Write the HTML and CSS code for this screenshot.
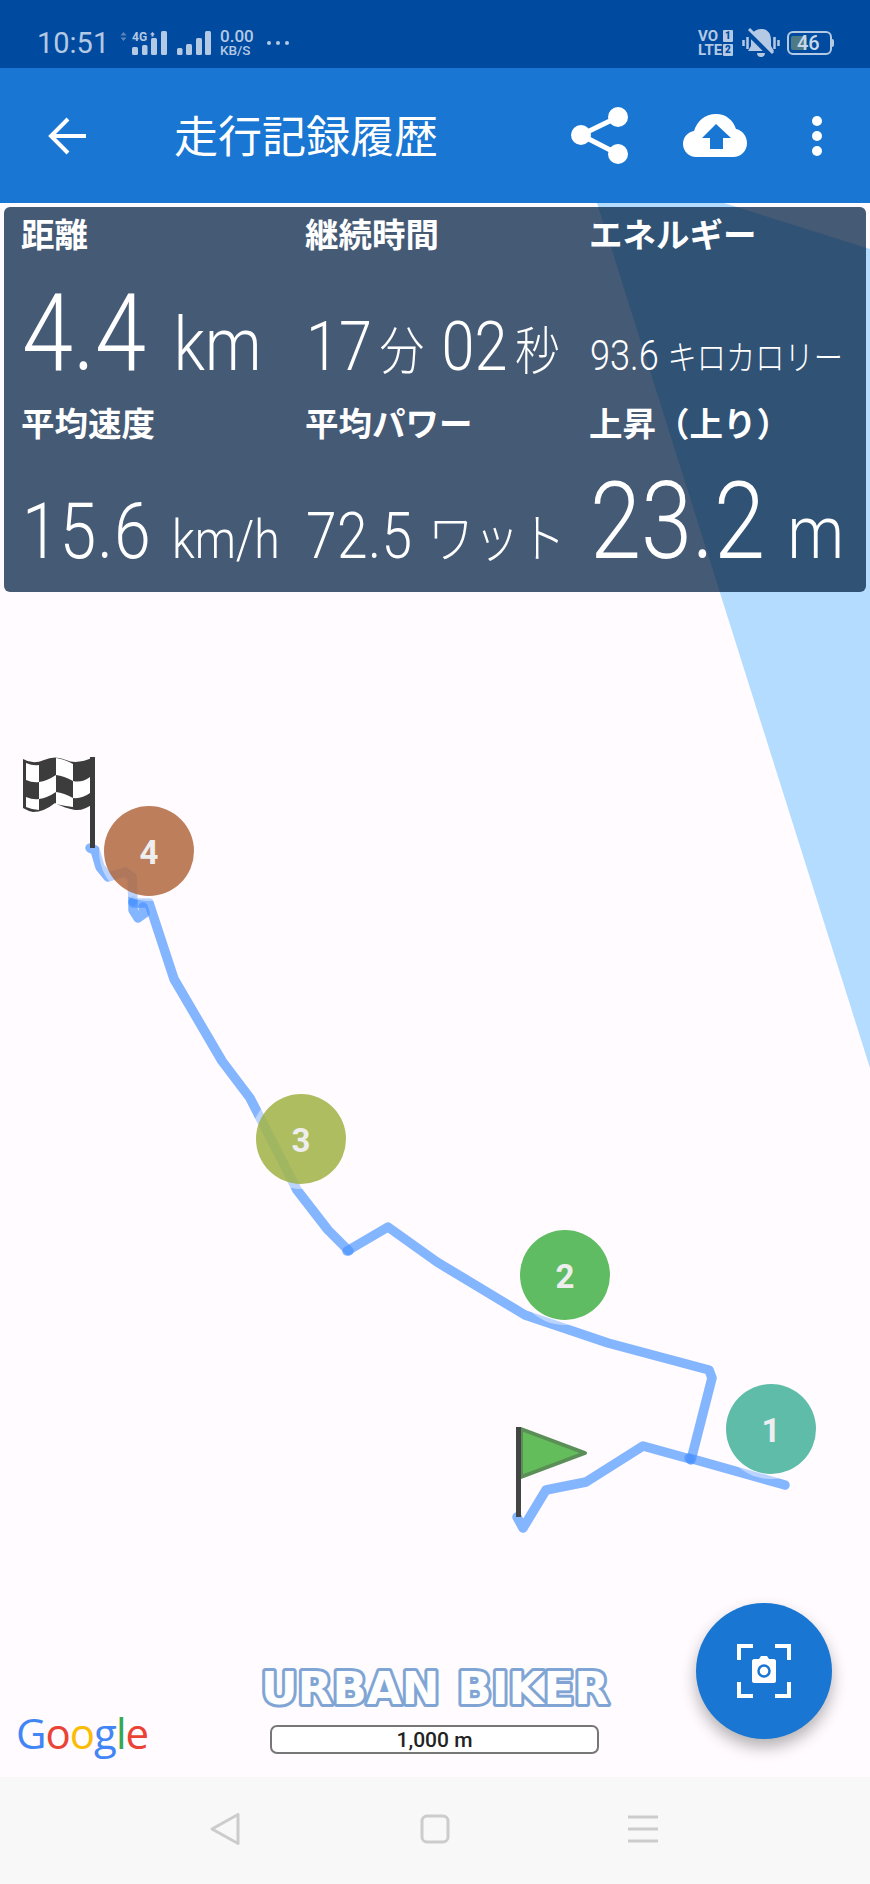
FILE: index.html
```html
<!DOCTYPE html>
<html lang="ja">
<head>
    <meta charset="UTF-8">
    <meta name="viewport" content="width=device-width, initial-scale=1.0">
    <title>走行記録履歴</title>
    <link rel="stylesheet" href="styles.css">
</head>
<body>
    <div class="status-bar">
        <span class="clock">10:51</span>
        <svg class="status-net" width="95" height="30" viewBox="120 28 95 30">
            <path d="M123.500 32l3 3.500h-6zM123.500 41l3-3.500h-6z" fill="#5f86bb"/>
            <text x="132" y="41" class="net-label">4G</text>
            <path d="M152.500 32l2.500 2.500h-5zM151.500 34.500h2v2h-2z" fill="#b4c9e4"/>
            <g fill="#b4c9e4">
                <rect x="132" y="47" width="6" height="8" rx="1.500"/>
                <rect x="142" y="45" width="5.500" height="10" rx="1.500"/>
                <rect x="151" y="38" width="6" height="17" rx="1.500"/>
                <rect x="161" y="31" width="6" height="24" rx="1.500"/>
                <rect x="177" y="48" width="5.500" height="7" rx="1.500"/>
                <rect x="186" y="44" width="6" height="11" rx="1.500"/>
                <rect x="196" y="38" width="6" height="17" rx="1.500"/>
                <rect x="205" y="31" width="6" height="24" rx="1.500"/>
            </g>
        </svg>
        <span class="speed"><span class="speed-num">0.00</span><span class="speed-unit">KB/S</span></span>
        <span class="more-dots">
            <i></i><i></i><i></i>
        </span>
        <span class="status-right">
            <span class="volte">
                <span class="volte-row">VO<b>1</b></span>
                <span class="volte-row">LTE<b>2</b></span>
            </span>
            <svg class="bell" width="38" height="30" viewBox="0 0 38 30">
                <path d="M19 1c-7 0-10 5-10 11v6l-3 5h26l-3-5v-6c0-6-3-11-10-11zM15 25c0 3 2 4 4 4s4-1 4-4z" fill="#b4c9e4"/>
                <path d="M6 4l24 24" stroke="#004a9f" stroke-width="6"/>
                <path d="M7 1l24 24" stroke="#b4c9e4" stroke-width="3"/>
                <path d="M1.500 12v6M5.500 9v12M32.500 9v12M36.500 12v6" stroke="#b4c9e4" stroke-width="2.500"/>
            </svg>
            <span class="battery">
                <span class="battery-fill"></span>
                <span class="battery-num">46</span>
            </span>
        </span>
    </div>

    <header class="app-bar">
        <svg class="back-icon" width="40" height="40" viewBox="0 0 40 40">
            <path d="M38 20H4M20 3L3 20l17 17" fill="none" stroke="#fff" stroke-width="4"/>
        </svg>
        <h1 class="title">走行記録履歴</h1>
        <svg class="share-icon" width="58" height="58" viewBox="0 0 58 58">
            <path d="M47 10L10 28l37 19" fill="none" stroke="#fff" stroke-width="5"/>
            <circle cx="47" cy="10" r="10" fill="#fff"/>
            <circle cx="10" cy="28" r="10" fill="#fff"/>
            <circle cx="47" cy="47" r="10" fill="#fff"/>
        </svg>
        <svg class="cloud-icon" width="64" height="44" viewBox="0 0 64 44">
            <path d="M13 43C6 43 0 37 0 30c0-7 5-12 11-13C14 7 22 0 33 0c10 0 17 6 20 15 6 1 11 7 11 14 0 8-6 14-14 14z" fill="#fff"/>
            <path d="M33 10L19 24h8v11h13V24h8z" fill="#1976d2"/>
        </svg>
        <span class="menu-dots"><i></i><i></i><i></i></span>
    </header>

    <main class="map">
        <svg class="map-canvas" width="870" height="1574" viewBox="0 203 870 1574">
            <polygon points="597,203 724,203 870,249 870,1068" fill="#b3dcff"/>

            <g fill="none" stroke="#4a94ff" stroke-opacity="0.68" stroke-width="9.500" stroke-linejoin="round" stroke-linecap="round">
                <polyline points="517,1517 523,1528 546,1490 586,1482 643,1446 690,1459"/>
                <polyline points="689,1458 785,1485"/>
                <polyline points="691,1460 712,1378 709,1370 608,1343 525,1315 437,1262 388,1227 347,1251"/>
                <polyline points="349,1251 328,1230 297,1190 250,1098 222,1061 174,979 149,903 133,903"/>
                <polyline points="133,901 133,910 138,918 145,913 143,907"/>
                <polyline points="133,901 132,877 125,872 108,877 100,867 95,850 90,848"/>
            </g>

            <g class="marker">
                <circle cx="771" cy="1429" r="50" fill="#fffbfe" fill-opacity="0.45"/>
                <circle cx="771" cy="1429" r="45" fill="#36ac94" fill-opacity="0.8"/>
                <text x="771" y="1442">1</text>
            </g>
            <g class="marker">
                <circle cx="565" cy="1275" r="50" fill="#fffbfe" fill-opacity="0.45"/>
                <circle cx="565" cy="1275" r="45" fill="#38ac3b" fill-opacity="0.8"/>
                <text x="565" y="1288">2</text>
            </g>
            <g class="marker">
                <circle cx="301" cy="1139" r="50" fill="#fffbfe" fill-opacity="0.45"/>
                <circle cx="301" cy="1139" r="45" fill="#9aae38" fill-opacity="0.8"/>
                <text x="301" y="1152">3</text>
            </g>
            <g class="marker">
                <circle cx="149" cy="851" r="50" fill="#fffbfe" fill-opacity="0.45"/>
                <circle cx="149" cy="851" r="45" fill="#ac5f33" fill-opacity="0.8"/>
                <text x="149" y="864">4</text>
            </g>

            <!-- start flag -->
            <path d="M521 1429L585 1453 521 1477z" fill="#63bd5a" stroke="#5b8f58" stroke-width="4" stroke-linejoin="round"/>
            <rect x="516" y="1427" width="5" height="90" fill="#444"/>

            <!-- finish flag -->
            <path d="M23 759Q33 765 44 760T66 760 94 757V803Q84 811 75 810 64 808 55 803 44 812 33 812 28 811 23 808z" fill="#3c3c3c"/>
            <rect x="90" y="757" width="5" height="91" fill="#3c3c3c"/>
            <g fill="#fff">
                <path d="M26 763Q33 766 39 765V782Q33 783 26 780z"/>
                <path d="M56 758Q64 759 73 764V781Q64 776 56 775z"/>
                <path d="M39 782Q47 781 56 775V792Q47 798 39 799z"/>
                <path d="M73 781Q82 783 90 777V793Q82 799 73 798z"/>
                <path d="M26 797Q33 800 39 799V810Q33 810 26 807z"/>
                <path d="M56 792Q64 793 73 798V807Q64 806 56 804z"/>
            </g>

            <text class="brand" x="261" y="1704" textLength="348" lengthAdjust="spacingAndGlyphs">URBAN BIKER</text>
        </svg>

        <section class="stats">
            <div class="stat-label">距離</div>
            <div class="stat-label">継続時間</div>
            <div class="stat-label">エネルギー</div>

            <div class="stat-value"><span class="squeeze val-big">4.4 <span class="unit-km">km</span></span></div>
            <div class="stat-value"><span class="squeeze val-mid">17<span class="unit-fun">分</span>02<span class="unit-sec">秒</span></span></div>
            <div class="stat-value"><span class="squeeze val-small">93.6 <span class="unit-kcal">キロカロリー</span></span></div>

            <div class="stat-label">平均速度</div>
            <div class="stat-label">平均パワー</div>
            <div class="stat-label">上昇（上り）</div>

            <div class="stat-value"><span class="squeeze val-speed">15.6 <span class="unit-kmh">km/h</span></span></div>
            <div class="stat-value"><span class="squeeze val-power">72.5 <span class="unit-watt">ワット</span></span></div>
            <div class="stat-value"><span class="squeeze val-big">23.2 <span class="unit-m">m</span></span></div>
        </section>

        <div class="google-logo"><span class="g-blue">G</span><span class="g-red">o</span><span class="g-yellow">o</span><span class="g-blue">g</span><span class="g-green">l</span><span class="g-red">e</span></div>
        <div class="scale-bar">1,000 m</div>

        <button class="fab">
            <svg width="54" height="54" viewBox="0 0 54 54">
                <path d="M2 16V2h14M38 2h14v14M52 38v14H38M16 52H2V38" fill="none" stroke="#fff" stroke-width="4"/>
                <path d="M17 15h5l2-3h6l2 3h5c1 0 2 1 2 2v20c0 1-1 2-2 2H17c-1 0-2-1-2-2V17c0-1 1-2 2-2z" fill="#fff"/>
                <circle cx="27" cy="27" r="5.500" fill="none" stroke="#1976d2" stroke-width="2.500"/>
            </svg>
        </button>
    </main>

    <nav class="nav-bar">
        <svg width="32" height="34" viewBox="0 0 32 34">
            <path d="M29 2.500v29L3 17z" fill="none" stroke="#ccc" stroke-width="3" stroke-linejoin="round"/>
        </svg>
        <svg width="30" height="30" viewBox="0 0 30 30">
            <rect x="2" y="2" width="26" height="26" rx="5" fill="none" stroke="#ccc" stroke-width="3"/>
        </svg>
        <svg width="30" height="28" viewBox="0 0 30 28">
            <path d="M0 2h30M0 14h30M0 26h30" stroke="#ccc" stroke-width="3"/>
        </svg>
    </nav>
</body>
</html>
```

FILE: styles.css
```css
* {
    box-sizing: border-box;
}

body {
    margin: 0;
    width: 870px;
    height: 1884px;
    display: flex;
    flex-direction: column;
    overflow: hidden;
    font-family: "Noto Sans CJK JP", Roboto, sans-serif;
    background-color: #fffbfe;
}

.status-bar {
    height: 68px;
    display: flex;
    align-items: center;
    padding: 18px 36px 0 37px;
    background-color: #004a9f;
    color: #b4c9e4;
    font-family: Roboto, sans-serif;
}

.clock {
    font-size: 29px;
    width: 83px;
}

.net-label {
    font: bold 12px Roboto, sans-serif;
    fill: #b4c9e4;
}

.speed {
    display: flex;
    flex-direction: column;
    margin-left: 5px;
    font-weight: 500;
}

.speed-num {
    font-size: 17px;
    line-height: 15px;
}

.speed-unit {
    font-size: 13.500px;
    line-height: 13px;
}

.more-dots {
    display: flex;
    gap: 5px;
    margin-left: 13px;
}

.more-dots i {
    width: 4px;
    height: 4px;
    border-radius: 50%;
    background-color: #b4c9e4;
}

.status-right {
    margin-left: auto;
    display: flex;
    align-items: center;
}

.volte {
    display: flex;
    flex-direction: column;
    gap: 2px;
    width: 35px;
    font-size: 15px;
    font-weight: bold;
}

.volte-row {
    display: flex;
    justify-content: space-between;
    height: 12px;
    line-height: 12px;
}

.volte b {
    width: 10px;
    font-size: 10px;
    text-align: center;
    border-radius: 1px;
    color: #004a9f;
    background-color: #b4c9e4;
}

.bell {
    margin: 0 7px 0 9px;
}

.battery {
    position: relative;
    width: 45px;
    height: 24px;
    margin-right: 2px;
    border: 2px solid #b4c9e4;
    border-radius: 6px;
}

.battery::after {
    content: "";
    position: absolute;
    right: -4px;
    top: 6px;
    width: 2px;
    height: 8px;
    border-radius: 0 2px 2px 0;
    background-color: #b4c9e4;
}

.battery-fill {
    position: absolute;
    left: 2px;
    top: 3px;
    width: 16px;
    height: 14px;
    border-radius: 2px;
    background-color: #4d7a85;
}

.battery-num {
    position: absolute;
    left: 8px;
    top: -2px;
    font-size: 20px;
    font-weight: 500;
    line-height: 24px;
    color: #c8d8ea;
}

.app-bar {
    height: 135px;
    display: flex;
    align-items: center;
    background-color: #1976d2;
}

.back-icon {
    margin-left: 48px;
}

.title {
    margin: -4px 0 0 86px;
    width: 396px;
    font-size: 44px;
    font-weight: normal;
    color: #fff;
}

.share-icon {
    margin-left: 1px;
}

.cloud-icon {
    margin-left: 54px;
}

.menu-dots {
    display: flex;
    flex-direction: column;
    gap: 5px;
    margin-left: 65px;
}

.menu-dots i {
    width: 10px;
    height: 10px;
    border-radius: 50%;
    background-color: #fff;
}

.map {
    position: relative;
    flex: 1;
    overflow: hidden;
    background-color: #fffbfe;
}

.map-canvas {
    position: absolute;
    left: 0;
    top: 0;
}

.marker text {
    font: bold 33px Roboto, sans-serif;
    fill: #eee;
    text-anchor: middle;
}

.brand {
    font: bold 45px "DejaVu Sans", sans-serif;
    word-spacing: 2px;
    fill: #fff;
    stroke: #80a5d4;
    stroke-width: 6px;
    stroke-linejoin: round;
    paint-order: stroke fill;
}

.stats {
    position: absolute;
    left: 4px;
    top: 4px;
    width: 862px;
    height: 385px;
    padding-left: 17px;
    display: grid;
    grid-template-columns: 284px 284px 1fr;
    grid-template-rows: 73px 116px 72px 1fr;
    border-radius: 6px;
    background-color: rgba(0, 30, 66, 0.73);
    color: #fff;
}

.stat-label {
    margin-top: 2px;
    font-size: 33.500px;
    font-weight: bold;
    line-height: 48px;
    white-space: nowrap;
}

.stat-value {
    align-self: baseline;
    margin-left: 1px;
    white-space: nowrap;
    font-family: Roboto, "Noto Sans CJK JP", sans-serif;
    font-weight: 300;
}

.squeeze {
    display: inline-block;
    transform: scaleX(0.86);
    transform-origin: left bottom;
}

.val-big {
    font-size: 107px;
    line-height: 107px;
}

.val-mid {
    font-size: 69px;
    line-height: 69px;
}

.val-small {
    font-size: 42px;
    line-height: 44px;
}

.val-speed {
    font-size: 77px;
    line-height: 77px;
    letter-spacing: 1px;
}

.val-power {
    font-size: 64px;
    line-height: 64px;
    letter-spacing: 0.500px;
}

.unit-km {
    margin-left: 6px;
    font-size: 74px;
}

.unit-m {
    font-size: 74px;
}

.unit-fun,
.unit-sec {
    font-size: 52px;
}

.unit-fun {
    margin: 0 20px 0 9px;
}

.unit-sec {
    margin-left: 9px;
}

.unit-kcal {
    font-size: 34px;
}

.unit-kmh {
    margin-left: 4px;
    font-size: 54px;
    letter-spacing: 0;
}

.unit-watt {
    margin-left: 2px;
    font-size: 53px;
}

.google-logo {
    position: absolute;
    left: 16px;
    top: 1502px;
    font-family: "Open Sans", sans-serif;
    font-size: 42px;
    font-weight: 500;
    line-height: 56px;
    letter-spacing: -1px;
}

.g-blue { color: #4285f4; }
.g-red { color: #ea4335; }
.g-yellow { color: #fbbc05; }
.g-green { color: #34a853; }

.scale-bar {
    position: absolute;
    left: 270px;
    top: 1522px;
    width: 329px;
    height: 29px;
    border: 2px solid #777;
    border-radius: 7px;
    background-color: #fff;
    text-align: center;
    font-family: Roboto, sans-serif;
    font-size: 21px;
    font-weight: 500;
    line-height: 26px;
    color: #222;
}

.fab {
    position: absolute;
    left: 696px;
    top: 1400px;
    width: 136px;
    height: 136px;
    padding: 0;
    border: none;
    border-radius: 50%;
    display: flex;
    align-items: center;
    justify-content: center;
    background-color: #1976d2;
    box-shadow: 0 8px 16px rgba(0, 0, 0, 0.3);
}

.nav-bar {
    height: 107px;
    display: flex;
    align-items: center;
    justify-content: space-between;
    padding: 0 212px 3px 209px;
    background-color: #f8f8f8;
}
```
